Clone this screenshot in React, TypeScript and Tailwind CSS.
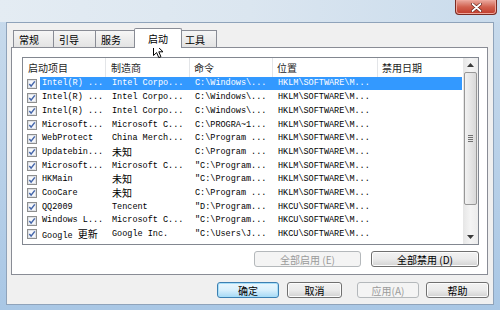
import React from "react";

type Row = { a: string; b: string; c: string; d: string; sel?: boolean };

const rows: Row[] = [
  { a: "Intel(R) ...", b: "Intel Corpo...", c: "C:\\Windows\\...", d: "HKLM\\SOFTWARE\\M...", sel: true },
  { a: "Intel(R) ...", b: "Intel Corpo...", c: "C:\\Windows\\...", d: "HKLM\\SOFTWARE\\M..." },
  { a: "Intel(R) ...", b: "Intel Corpo...", c: "C:\\Windows\\...", d: "HKLM\\SOFTWARE\\M..." },
  { a: "Microsoft...", b: "Microsoft C...", c: "C:\\PROGRA~1...", d: "HKLM\\SOFTWARE\\M..." },
  { a: "WebProtect", b: "China Merch...", c: "C:\\Program ...", d: "HKLM\\SOFTWARE\\M..." },
  { a: "Updatebin...", b: "未知", c: "C:\\Program ...", d: "HKLM\\SOFTWARE\\M..." },
  { a: "Microsoft...", b: "Microsoft C...", c: "\"C:\\Program...", d: "HKLM\\SOFTWARE\\M..." },
  { a: "HKMain", b: "未知", c: "\"C:\\Program...", d: "HKLM\\SOFTWARE\\M..." },
  { a: "CooCare", b: "未知", c: "C:\\Program ...", d: "HKLM\\SOFTWARE\\M..." },
  { a: "QQ2009", b: "Tencent", c: "\"D:\\Program...", d: "HKCU\\SOFTWARE\\M..." },
  { a: "Windows L...", b: "Microsoft C...", c: "\"C:\\Program...", d: "HKCU\\SOFTWARE\\M..." },
  { a: "Google 更新", b: "Google Inc.", c: "\"C:\\Users\\J...", d: "HKCU\\SOFTWARE\\M..." },
];

function Txt({ s }: { s: string }) {
  const parts: { t: string; cjk: boolean }[] = [];
  for (const ch of s) {
    const cjk = ch.charCodeAt(0) > 0x2e80;
    const last = parts[parts.length - 1];
    if (last && last.cjk === cjk) last.t += ch;
    else parts.push({ t: ch, cjk });
  }
  return (
    <>
      {parts.map((p, i) =>
        p.cjk ? (
          <span key={i} className="text-[10px] [font-family:'Noto_Sans_CJK_SC',sans-serif]">
            {p.t}
          </span>
        ) : (
          <span key={i}>{p.t}</span>
        )
      )}
    </>
  );
}

function Check() {
  return (
    <svg width="10" height="10" viewBox="0 0 10 10">
      <rect x="0.5" y="0.5" width="9" height="9" fill="#eef0f4" stroke="#8e8f8f" />
      <rect x="1.5" y="1.5" width="7" height="7" fill="#f7f8fa" stroke="#d3d6dc" strokeWidth="0.6" />
      <path d="M2.3 5 L4.1 7.1 L7.8 2.4" stroke="#4466aa" strokeWidth="1.5" fill="none" />
    </svg>
  );
}

const cjk = "[font-family:'Noto_Sans_CJK_SC','Noto_Sans',sans-serif]";

function Tab({ label, w, sel }: { label: string; w: string; sel?: boolean }) {
  if (sel) {
    return (
      <div
        className={`relative z-10 -mx-[2px] ${w} h-[20px] -mb-[1px] bg-white border border-b-0 border-[#898c95] rounded-t-[2px] flex items-center justify-center text-[10px] text-black ${cjk}`}
      >
        {label}
      </div>
    );
  }
  return (
    <div
      className={`${w} h-[17px] mt-[2px] bg-gradient-to-b from-[#f6f6f6] to-[#e3e3e3] border border-b-0 border-[#898c95] -ml-[1px] first:ml-0 flex items-center pl-[5px] text-[10px] text-black ${cjk}`}
    >
      {label}
    </div>
  );
}

function Btn({
  label,
  w,
  disabled,
  def,
}: {
  label: string;
  w: string;
  disabled?: boolean;
  def?: boolean;
}) {
  if (disabled)
    return (
      <div
        className={`${w} h-[16px] rounded-[3px] border border-[#b4b8bb] bg-[#f4f4f4] flex items-center justify-center text-[10px] text-[#9a9a9a] ${cjk}`}
      >
        {label}
      </div>
    );
  if (def)
    return (
      <div
        className={`${w} h-[16px] rounded-[3px] border border-[#3c7fb1] bg-gradient-to-b from-[#eaf6fd] via-[#d9f0fc] to-[#a7d9f5] shadow-[inset_0_0_0_1px_#a8dff9] flex items-center justify-center text-[10px] text-black ${cjk}`}
      >
        {label}
      </div>
    );
  return (
    <div
      className={`${w} h-[16px] rounded-[3px] border border-[#707070] bg-gradient-to-b from-[#f2f2f2] via-[#ebebeb] to-[#d2d2d2] shadow-[inset_0_0_0_1px_#fcfcfc] flex items-center justify-center text-[10px] text-black ${cjk}`}
    >
      {label}
    </div>
  );
}

export default function App() {
  return (
    <div className="relative w-[500px] h-[310px] overflow-hidden bg-gradient-to-b from-[#c9dbec] to-[#a9c7e5] flex flex-col">
      {/* title bar */}
      <div className="h-[22px] shrink-0 bg-gradient-to-r from-[#e4ecf3] via-[#dbe6f0] to-[#c9dbec] flex justify-end pr-[3px]">
        <div className="w-[42px] h-[15px] rounded-b-[4px] border border-t-0 border-[#7a2b22] bg-gradient-to-b from-[#e9a99f] via-[#d1604e] to-[#c0392a] shadow-[inset_0_0_0_1px_#eea79c] flex items-center justify-center">
          <svg width="11" height="9" viewBox="0 0 11 9">
            <path d="M1.5 1 L9.5 8 M9.5 1 L1.5 8" stroke="#5a1a12" strokeWidth="3" strokeLinecap="round" />
            <path d="M1.5 1 L9.5 8 M9.5 1 L1.5 8" stroke="#ffffff" strokeWidth="1.8" strokeLinecap="round" />
          </svg>
        </div>
      </div>

      {/* client */}
      <div className="mx-[6px] h-[283px] shrink-0 bg-[#f0f0f0] border border-[#8fa3ba] flex flex-col pl-[4px] pt-[5px]">
        {/* tabs */}
        <div className="flex items-start pl-[2px] h-[19px]">
          <Tab label="常规" w="w-[41px]" />
          <Tab label="引导" w="w-[43px]" />
          <Tab label="服务" w="w-[41px]" />
          <Tab label="启动" w="w-[48px]" sel />
          <Tab label="工具" w="w-[38px]" />
        </div>

        {/* panel */}
        <div className="w-[477px] h-[228px] bg-white border border-[#898c95] flex flex-col pl-[10px] pt-[9px]">
          {/* list */}
          <div className="w-[457px] h-[188px] border border-[#828790] bg-white flex">
            <div className="w-[439px] flex flex-col">
              {/* header */}
              <div className={`h-[19px] flex text-[10px] text-[#1e1e1e] ${cjk}`}>
                <div className="w-[83px] pl-[5px] flex items-center border-r border-[#e3e5e8]">启动项目</div>
                <div className="w-[84px] pl-[5px] flex items-center border-r border-[#e3e5e8]">制造商</div>
                <div className="w-[83px] pl-[4px] flex items-center border-r border-[#e3e5e8]">命令</div>
                <div className="w-[105px] pl-[4px] flex items-center border-r border-[#e3e5e8]">位置</div>
                <div className="w-[84px] pl-[4px] flex items-center">禁用日期</div>
              </div>
              {/* rows */}
              <div className="flex flex-col [font-family:'Liberation_Mono','Noto_Sans_CJK_SC',monospace] text-[8.5px]">
                {rows.map((r, i) => (
                  <div key={i} className="h-[13.7px] flex items-center">
                    <div className="w-[17px] pl-[4px] flex items-center">
                      <Check />
                    </div>
                    <div
                      className={`flex h-[13px] items-center whitespace-nowrap ${
                        r.sel ? "bg-[#3399ff] text-white" : "text-black"
                      }`}
                    >
                      <div className="w-[66px] pl-[2px] overflow-hidden">
                        <Txt s={r.a} />
                      </div>
                      <div className="w-[84px] pl-[6px] overflow-hidden">
                        <Txt s={r.b} />
                      </div>
                      <div className="w-[83px] pl-[5px] overflow-hidden">
                        <Txt s={r.c} />
                      </div>
                      <div className="w-[105px] pl-[5px] overflow-hidden">
                        <Txt s={r.d} />
                      </div>
                      <div className="w-[84px]" />
                    </div>
                  </div>
                ))}
              </div>
            </div>
            {/* scrollbar */}
            <div className="w-[15px] ml-auto bg-gradient-to-r from-[#e6e6e6] via-[#f4f4f4] to-[#ececec] flex flex-col items-center">
              <div className="h-[14px] flex items-center justify-center">
                <svg width="7" height="4" viewBox="0 0 7 4">
                  <path d="M0 4 L3.5 0 L7 4 Z" fill="#3b3b3b" />
                </svg>
              </div>
              <div className="w-[13px] h-[133px] rounded-[2px] border border-[#979797] bg-gradient-to-r from-[#f2f2f2] to-[#d9d9d9] flex flex-col items-center justify-center gap-[1px]">
                <div className="w-[5px] h-[1px] bg-[#707070]" />
                <div className="w-[5px] h-[1px] bg-[#707070]" />
                <div className="w-[5px] h-[1px] bg-[#707070]" />
                <div className="w-[5px] h-[1px] bg-[#707070]" />
              </div>
              <div className="flex-1" />
              <div className="h-[14px] flex items-center justify-center">
                <svg width="7" height="4" viewBox="0 0 7 4">
                  <path d="M0 0 L3.5 4 L7 0 Z" fill="#3b3b3b" />
                </svg>
              </div>
            </div>
          </div>
          {/* list buttons */}
          <div className="w-[457px] mt-[6px] flex justify-end gap-[10px]">
            <Btn label="全部启用 (E)" w="w-[107px]" disabled />
            <Btn label="全部禁用 (D)" w="w-[108px]" />
          </div>
        </div>

        {/* dialog buttons */}
        <div className="mt-[7px] flex pl-[206px]">
          <Btn label="确定" w="w-[62px]" def />
          <div className="w-[8px]" />
          <Btn label="取消" w="w-[55px]" />
          <div className="w-[15px]" />
          <Btn label="应用(A)" w="w-[62px]" disabled />
          <div className="w-[7px]" />
          <Btn label="帮助" w="w-[63px]" />
        </div>
      </div>

      {/* mouse cursor */}
      <svg className="absolute left-[153px] top-[42px]" width="11" height="17" viewBox="0 0 11 17">
        <path
          d="M0.5 0.5 L0.5 13.5 L3.6 10.6 L5.8 15.6 L7.9 14.7 L5.8 9.8 L10 9.8 Z"
          fill="#ffffff"
          stroke="#000000"
          strokeWidth="1"
          strokeLinejoin="round"
        />
      </svg>
    </div>
  );
}
